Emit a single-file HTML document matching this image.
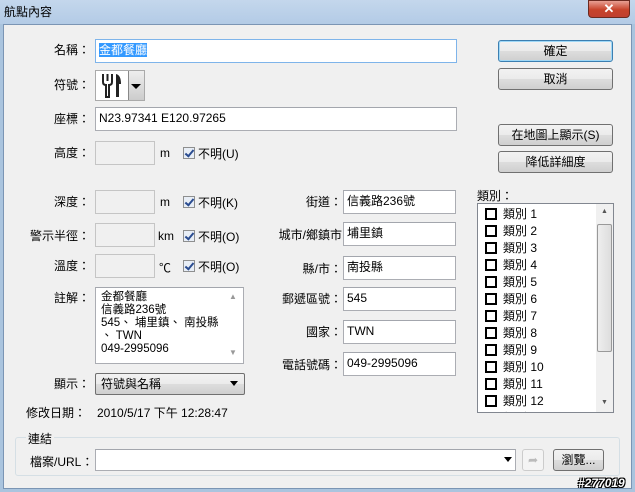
<!DOCTYPE html>
<html><head><meta charset="utf-8"><style>
*{box-sizing:border-box;margin:0;padding:0}
body{width:635px;height:492px;overflow:hidden;background:#aac4de;font-family:"Liberation Sans","Noto Sans CJK TC",sans-serif;font-size:12px;color:#000;position:relative}
.a{position:absolute;white-space:nowrap}
.title{left:0;top:0;width:635px;height:24px;background:linear-gradient(#c4d7ec,#b3cbe6)}
.body{left:3px;top:24px;width:629px;height:465px;background:#f0f0f0;border:1px solid #7b95b4}
.lbl{text-align:right;line-height:14px}
.in{background:#fff;border:1px solid #abadb3;border-top-color:#a3a6ad;padding:2px 3px;line-height:16px}
.dis{background:#f0f0f0;border:1px solid #c5c5c5}
.btn{border:1px solid #707070;border-radius:3px;background:linear-gradient(#f2f2f2 0%,#ebebeb 50%,#dddddd 51%,#cfcfcf 100%);text-align:center;line-height:20px}
.cb{width:12px;height:12px;border:1px solid #8e8f8f;background:#e8eef6}
.cb:after{content:"";position:absolute;left:3px;top:0px;width:3px;height:7px;border:solid #2a4c90;border-width:0 2px 2px 0;transform:rotate(40deg)}
.box{display:inline-block;width:12px;height:12px;border:2px solid #000;vertical-align:-2px;margin-right:6px}
</style></head><body>
<div class="a title"></div>
<div class="a" style="left:4px;top:3px;font-size:12px;color:#000">航點內容</div>
<div class="a" style="left:588px;top:0;width:42px;height:18px;border-radius:0 0 4px 4px;background:linear-gradient(#e8a093,#c7432b 55%,#c04030);border:1px solid #6b2a20;color:#fff;text-align:center;font-weight:bold;font-size:13px;line-height:16px">✕</div>
<div class="a body"></div>

<div class="a lbl" style="left:30px;width:60px;top:43px">名稱：</div>
<div class="a in" style="left:95px;top:39px;width:362px;height:24px;border-color:#7eb4ea"><span style="background:#3399ff;color:#fff">金都餐廳</span></div>
<div class="a lbl" style="left:30px;width:60px;top:78px">符號：</div>
<div class="a" style="left:95px;top:70px;width:50px;height:31px;border:1px solid #aaa;background:#fff"></div>
<svg class="a" style="left:100px;top:73px" width="24" height="25"><path d="M3 1v8q0 3 3 3v12h3V12q3 0 3-3V1M7.5 1v7" stroke="#222" stroke-width="2" fill="none"/><path d="M16 1q5 1 5 10h-2v13h-3z" fill="#222"/></svg>
<div class="a" style="left:128px;top:71px;width:16px;height:29px;background:linear-gradient(#eee,#ccc);border-left:1px solid #888"></div>
<div class="a" style="left:131px;top:84px;border:5px solid transparent;border-top:5px solid #000;border-bottom:0"></div>
<div class="a lbl" style="left:30px;width:60px;top:112px">座標：</div>
<div class="a in" style="left:95px;top:107px;width:362px;height:24px">N23.97341 E120.97265</div>

<div class="a lbl" style="left:30px;width:60px;top:146px">高度：</div>
<div class="a dis" style="left:95px;top:141px;width:60px;height:24px"></div>
<div class="a" style="left:160px;top:146px">m</div>
<div class="a cb" style="left:183px;top:147px"></div><div class="a" style="left:198px;top:145px">不明(U)</div>

<div class="a lbl" style="left:30px;width:60px;top:195px">深度：</div>
<div class="a dis" style="left:95px;top:190px;width:60px;height:24px"></div>
<div class="a" style="left:160px;top:195px">m</div>
<div class="a cb" style="left:183px;top:196px"></div><div class="a" style="left:198px;top:194px">不明(K)</div>

<div class="a lbl" style="left:10px;width:80px;top:229px">警示半徑：</div>
<div class="a dis" style="left:95px;top:223px;width:60px;height:24px"></div>
<div class="a" style="left:158px;top:229px">km</div>
<div class="a cb" style="left:183px;top:230px"></div><div class="a" style="left:198px;top:228px">不明(O)</div>

<div class="a lbl" style="left:30px;width:60px;top:259px">溫度：</div>
<div class="a dis" style="left:95px;top:254px;width:60px;height:24px"></div>
<div class="a" style="left:159px;top:259px">℃</div>
<div class="a cb" style="left:183px;top:260px"></div><div class="a" style="left:198px;top:258px">不明(O)</div>

<div class="a lbl" style="left:30px;width:60px;top:291px">註解：</div>
<div class="a in" style="left:95px;top:287px;width:149px;height:77px;line-height:13px;padding:3px 5px;font-size:11.5px">金都餐廳<br>信義路236號<br>545、 埔里鎮、 南投縣<br>、 TWN<br>049-2995096</div>
<div class="a" style="left:229px;top:292px;color:#999;font-size:8px">▲</div>
<div class="a" style="left:229px;top:348px;color:#999;font-size:8px">▼</div>

<div class="a lbl" style="left:30px;width:60px;top:377px">顯示：</div>
<div class="a btn" style="left:95px;top:373px;width:150px;height:22px;text-align:left;padding-left:5px;border-radius:2px">符號與名稱</div>
<div class="a" style="left:230px;top:381px;border:4px solid transparent;border-top:5px solid #000;border-bottom:0"></div>
<div class="a" style="left:26px;top:404px">修改日期：</div>
<div class="a" style="left:97px;top:404px">2010/5/17 下午 12:28:47</div>

<div class="a lbl" style="left:260px;width:82px;top:195px">街道：</div>
<div class="a in" style="left:343px;top:190px;width:113px;height:24px">信義路236號</div>
<div class="a lbl" style="left:260px;width:82px;top:228px">城市/鄉鎮市</div>
<div class="a in" style="left:343px;top:222px;width:113px;height:24px">埔里鎮</div>
<div class="a lbl" style="left:260px;width:82px;top:262px">縣/市：</div>
<div class="a in" style="left:343px;top:256px;width:113px;height:24px">南投縣</div>
<div class="a lbl" style="left:260px;width:82px;top:292px">郵遞區號：</div>
<div class="a in" style="left:343px;top:287px;width:113px;height:24px">545</div>
<div class="a lbl" style="left:260px;width:82px;top:325px">國家：</div>
<div class="a in" style="left:343px;top:320px;width:113px;height:24px">TWN</div>
<div class="a lbl" style="left:260px;width:82px;top:358px">電話號碼：</div>
<div class="a in" style="left:343px;top:352px;width:113px;height:24px">049-2995096</div>

<div class="a btn" style="left:498px;top:40px;width:115px;height:22px;border-color:#3c7fb1;box-shadow:inset 0 0 0 1px #9fd8f7">確定</div>
<div class="a btn" style="left:498px;top:68px;width:115px;height:22px">取消</div>
<div class="a btn" style="left:498px;top:124px;width:115px;height:22px">在地圖上顯示(S)</div>
<div class="a btn" style="left:498px;top:151px;width:115px;height:22px">降低詳細度</div>
<div class="a" style="left:477px;top:187px">類別：</div>
<div class="a" style="left:477px;top:203px;width:137px;height:210px;background:#fff;border:1px solid #828790;overflow:hidden"></div>
<div class="a" style="left:596px;top:204px;width:17px;height:208px;background:#f0f0f0"></div>
<div class="a" style="left:597px;top:224px;width:15px;height:128px;border:1px solid #999;border-radius:2px;background:linear-gradient(90deg,#eee,#ddd)"></div>
<div class="a" style="left:601px;top:208px;color:#555;font-size:7px">▲</div>
<div class="a" style="left:601px;top:399px;color:#555;font-size:7px">▼</div>
<div class="a" style="left:478px;top:204px;width:118px;height:208px;overflow:hidden">
<div style="position:absolute;left:7px;top:2px;line-height:17px">
<div><span class="box"></span>類別 1</div><div><span class="box"></span>類別 2</div><div><span class="box"></span>類別 3</div><div><span class="box"></span>類別 4</div><div><span class="box"></span>類別 5</div><div><span class="box"></span>類別 6</div><div><span class="box"></span>類別 7</div><div><span class="box"></span>類別 8</div><div><span class="box"></span>類別 9</div><div><span class="box"></span>類別 10</div><div><span class="box"></span>類別 11</div><div><span class="box"></span>類別 12</div><div><span class="box"></span>類別 13</div>
</div></div>

<div class="a" style="left:15px;top:437px;width:605px;height:39px;border:1px solid #d5dfe5;border-radius:3px"></div>
<div class="a" style="left:26px;top:430px;background:#f0f0f0;padding:0 2px">連結</div>
<div class="a" style="left:30px;top:453px">檔案/URL：</div>
<div class="a in" style="left:95px;top:449px;width:421px;height:22px"></div>
<div class="a" style="left:504px;top:457px;border:4px solid transparent;border-top:5px solid #000;border-bottom:0"></div>
<div class="a" style="left:522px;top:449px;width:22px;height:22px;border:1px solid #ccc;border-radius:3px;background:#f4f4f4;color:#bbb;text-align:center;line-height:20px">➦</div>
<div class="a btn" style="left:553px;top:449px;width:51px;height:22px">瀏覽...</div>
<div class="a" style="left:578px;top:476px;font-weight:bold;font-style:italic;color:#fff;font-size:12px;text-shadow:0 0 1px #000,1px 1px 0 #000,-1px -1px 0 #000,1px -1px 0 #000,-1px 1px 0 #000">#277019</div>
</body></html>
